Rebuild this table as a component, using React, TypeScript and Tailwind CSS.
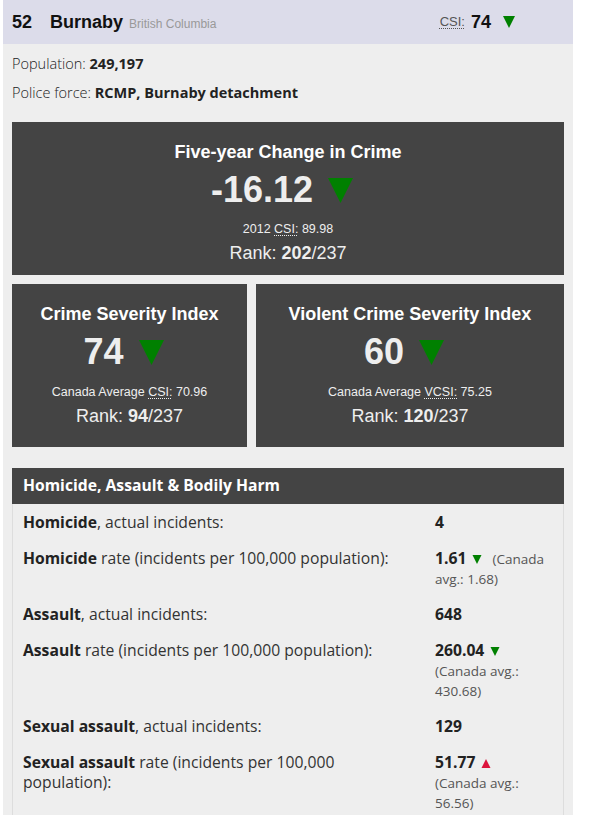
import React from "react"

const sans = { fontFamily: '"Liberation Sans", Arial, sans-serif' }
const ui = { fontFamily: '"Open Sans", sans-serif' }

function Down({ className }: { className: string }) {
  return (
    <svg className={className} viewBox="0 0 10 10" aria-hidden="true">
      <polygon points="0,0 10,0 5,10" fill="#008000" />
    </svg>
  )
}

function Up({ className }: { className: string }) {
  return (
    <svg className={className} viewBox="0 0 10 10" aria-hidden="true">
      <polygon points="5,0 10,10 0,10" fill="#dc143c" />
    </svg>
  )
}

function Abbr({ children }: { children: React.ReactNode }) {
  return <span className="underline decoration-dotted decoration-1 underline-offset-2">{children}</span>
}

type Row = {
  label: string
  rest: string
  value: string
  dir?: "down" | "up"
  note?: string
}

const rows: Row[] = [
  { label: "Homicide", rest: ", actual incidents:", value: "4" },
  { label: "Homicide", rest: " rate (incidents per 100,000 population):", value: "1.61", dir: "down", note: "(Canada avg.: 1.68)" },
  { label: "Assault", rest: ", actual incidents:", value: "648" },
  { label: "Assault", rest: " rate (incidents per 100,000 population):", value: "260.04", dir: "down", note: "(Canada avg.: 430.68)" },
  { label: "Sexual assault", rest: ", actual incidents:", value: "129" },
  { label: "Sexual assault", rest: " rate (incidents per 100,000 population):", value: "51.77", dir: "up", note: "(Canada avg.: 56.56)" },
]

function StatBox({
  title,
  value,
  avgLabel,
  avg,
  rank,
  className,
}: {
  title: string
  value: string
  avgLabel: React.ReactNode
  avg: string
  rank: string
  className: string
}) {
  return (
    <div className={`bg-[#444444] pt-[19px] ${className}`}>
      <div className="text-[18px] font-bold leading-[22px] text-white">{title}</div>
      <div className="mt-[7px] flex items-center justify-center pr-[12px] text-[36px] font-bold leading-[40px]">
        {value}
        <Down className="ml-[15px] h-[25px] w-[25px]" />
      </div>
      <div className="mt-[12px] text-[12.5px] leading-[16px]">
        {avgLabel} {avg}
      </div>
      <div className="mt-[5px] text-[18px] leading-[22px]">
        Rank: <span className="font-bold">{rank}</span>/237
      </div>
    </div>
  )
}

export default function App() {
  return (
    <div className="min-h-[815px] bg-white">
      <div className="ml-[3px] w-[570px] bg-[#eeeeee]">
        {/* Header */}
        <div className="flex h-[44px] items-center bg-[#dcdcea] pl-[9px] pr-[58px] text-[#111]" style={sans}>
          <span className="text-[18px] font-bold">52</span>
          <span className="ml-[18px] text-[18px] font-bold">Burnaby</span>
          <span className="ml-[6px] mt-[3px] text-[12px] text-[#999]">British Columbia</span>
          <span className="ml-auto text-[13px] text-[#555]">
            <Abbr>CSI:</Abbr>
          </span>
          <span className="ml-[6px] text-[18px] font-bold">74</span>
          <Down className="ml-[12px] h-[12px] w-[12px]" />
        </div>

        {/* Summary */}
        <div className="px-[9px] pt-[5px] text-[14.5px] leading-[29px] text-[#222]" style={ui}>
          <div className="font-light">
            Population: <span className="font-bold">249,197</span>
          </div>
          <div className="font-light">
            Police force: <span className="font-bold">RCMP, Burnaby detachment</span>
          </div>
        </div>

        <div className="px-[9px] pt-[15px] text-center text-[#eeeeee]" style={sans}>
          <div className="bg-[#444444] pb-[11px] pt-[19px]">
            <div className="text-[18px] font-bold leading-[22px] text-white">Five-year Change in Crime</div>
            <div className="mt-[7px] flex items-center justify-center pr-[12px] text-[36px] font-bold leading-[40px]">
              -16.12
              <Down className="ml-[15px] h-[25px] w-[25px]" />
            </div>
            <div className="mt-[11px] text-[12.5px] leading-[16px]">
              2012 <Abbr>CSI:</Abbr> 89.98
            </div>
            <div className="mt-[5px] text-[18px] leading-[22px]">
              Rank: <span className="font-bold">202</span>/237
            </div>
          </div>

          <div className="mt-[9px] flex gap-[9px]">
            <StatBox
              className="w-[235px] pb-[20px]"
              title="Crime Severity Index"
              value="74"
              avgLabel={
                <>
                  Canada Average <Abbr>CSI:</Abbr>
                </>
              }
              avg="70.96"
              rank="94"
            />
            <StatBox
              className="flex-1 pb-[20px]"
              title="Violent Crime Severity Index"
              value="60"
              avgLabel={
                <>
                  Canada Average <Abbr>VCSI:</Abbr>
                </>
              }
              avg="75.25"
              rank="120"
            />
          </div>
        </div>

        {/* Table */}
        <div className="mx-[9px] mt-[21px] text-[#333]" style={ui}>
          <div className="flex h-[36px] items-center bg-[#444444] px-[11px] text-[15.7px] font-bold text-white">
            Homicide, Assault &amp; Bodily Harm
          </div>
          <div className="border-x border-b border-[#dddddd] pb-[30px]">
            {rows.map((r, i) => (
              <div key={i} className="grid grid-cols-[1fr_128px] py-[8px] text-[15.7px] leading-[20px]">
                <div className="pl-[10px] pr-[20px]">
                  <span className="font-bold text-[#222]">{r.label}</span>
                  {r.rest}
                </div>
                <div className="pr-[12px]">
                  <span className="font-bold text-[#222]">{r.value}</span>
                  {r.dir === "down" && <Down className="ml-[6px] mr-[6px] inline-block h-[9px] w-[10px] align-baseline" />}
                  {r.dir === "up" && <Up className="ml-[6px] mr-[6px] inline-block h-[9px] w-[10px] align-baseline" />}
                  {r.note && (
                    <>
                      {" "}
                      <span className="text-[13.5px] leading-[16px] text-[#555]">{r.note}</span>
                    </>
                  )}
                </div>
              </div>
            ))}
          </div>
        </div>
      </div>
    </div>
  )
}
